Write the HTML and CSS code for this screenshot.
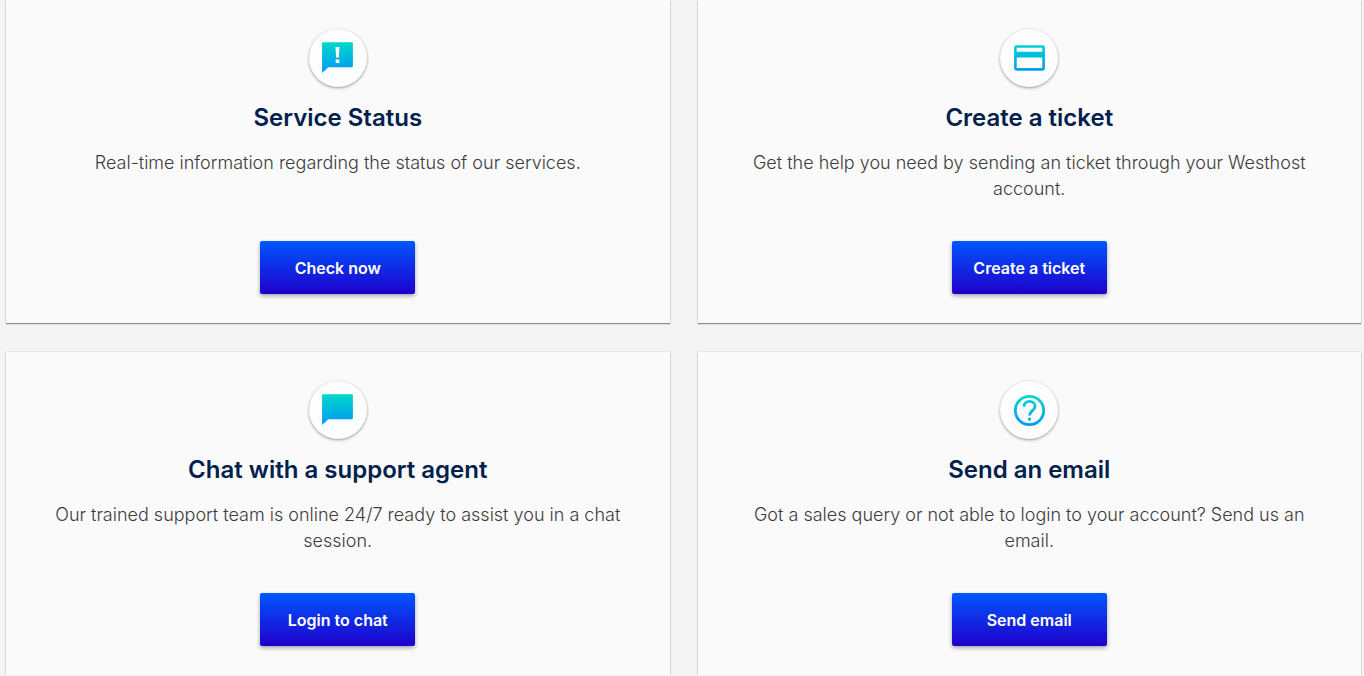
FILE: index.html
```html
<!DOCTYPE html>
<html lang="en">
<head>
<meta charset="utf-8">
<title>Support</title>
<link rel="stylesheet" href="styles.css">
</head>
<body>
<svg class="defs" aria-hidden="true"><defs><linearGradient id="aqua" gradientUnits="userSpaceOnUse" x1="0" y1="2" x2="0" y2="22"><stop offset="0" stop-color="#00d9cb"/><stop offset="1" stop-color="#0098f5"/></linearGradient></defs></svg>
<main class="grid">
<section class="card">
<span class="badge"><svg class="icon" viewBox="0 0.600 24 24"><path fill-rule="evenodd" d="M2.700 2H21.300Q22 2 22 2.700V17.500Q22 18.200 21.300 18.200H6L2 22V2.700Q2 2 2.700 2zM10.700 5.200L11.100 12H12.900L13.300 5.200zM10.800 13.300V15.500H13.200V13.300z"/></svg></span>
<h2 class="title">Service Status</h2>
<p class="text">Real-time information regarding the status of our services.</p>
<button class="button" type="button">Check now</button>
</section>
<section class="card">
<span class="badge"><svg class="icon" viewBox="0 0.600 24 24"><path d="M20.500 4H3.500Q2 4 2 5.500V19Q2 20.500 3.500 20.500H20.500Q22 20.500 22 19V5.500Q22 4 20.500 4zM20.300 18.800H3.700V12h16.600v6.800zm0-10.500H3.700V5.700h16.600v2.600z"/></svg></span>
<h2 class="title">Create a ticket</h2>
<p class="text">Get the help you need by sending an ticket through your Westhost account.</p>
<button class="button" type="button">Create a ticket</button>
</section>
<section class="card">
<span class="badge"><svg class="icon" viewBox="0 0.600 24 24"><path d="M2.700 2H21.300Q22 2 22 2.700V17.500Q22 18.200 21.300 18.200H6L2 22V2.700Q2 2 2.700 2z"/></svg></span>
<h2 class="title">Chat with a support agent</h2>
<p class="text">Our trained support team is online 24/7 ready to assist you in a chat session.</p>
<button class="button" type="button">Login to chat</button>
</section>
<section class="card">
<span class="badge"><svg class="icon outline" viewBox="0 0 24 24"><circle cx="12" cy="12" r="9.200"/><path d="M8.400 9.600C8.400 7.400 10 6.100 12 6.100S15.600 7.500 15.600 9.400C15.600 12 12 12.200 12 15.200"/><path d="M12 16.700V18.500"/></svg></span>
<h2 class="title">Send an email</h2>
<p class="text">Got a sales query or not able to login to your account? Send us an email.</p>
<button class="button" type="button">Send email</button>
</section>
</main>
</body>
</html>
```
FILE: styles.css
```css
* { box-sizing: border-box; }
body { margin: 0; background: #f4f4f4; font-family: Inter, sans-serif; }
.defs { position: absolute; width: 0; height: 0; }
.grid { display: grid; grid-template-columns: 1fr 1fr; gap: 29px 28px; padding: 0 3px 0 6px; }
.card { display: flex; flex-direction: column; align-items: center; padding: 29px 48px; background: #fafafa; box-shadow: 0 1px 1px rgba(0,0,0,.4), 0 0 2px rgba(0,0,0,.15); text-align: center; }
.badge { display: flex; align-items: center; justify-content: center; width: 58px; height: 58px; border-radius: 50%; background: #fdfdfd; box-shadow: 0 1px 3px rgba(0,0,0,.4); }
.icon { width: 37px; height: 37px; fill: url(#aqua); }
.outline { fill: none; stroke: url(#aqua); stroke-width: 1.8; }
.title { margin: 15px 0 0; color: #00204d; font-size: 24px; line-height: 32px; font-weight: 600; }
.text { min-height: 52px; margin: 16px 0 39px; color: #3c3c3c; font-size: 18px; line-height: 26px; font-weight: 300; }
.button { width: 155px; height: 53px; margin-top: auto; padding: 0; border: 0; border-radius: 2px; background: linear-gradient(#0057ff, #1e00cb); box-shadow: 0 2px 4px rgba(0,0,0,.35); color: #fff; font: 600 16px/24px Inter, sans-serif; cursor: pointer; }
```
